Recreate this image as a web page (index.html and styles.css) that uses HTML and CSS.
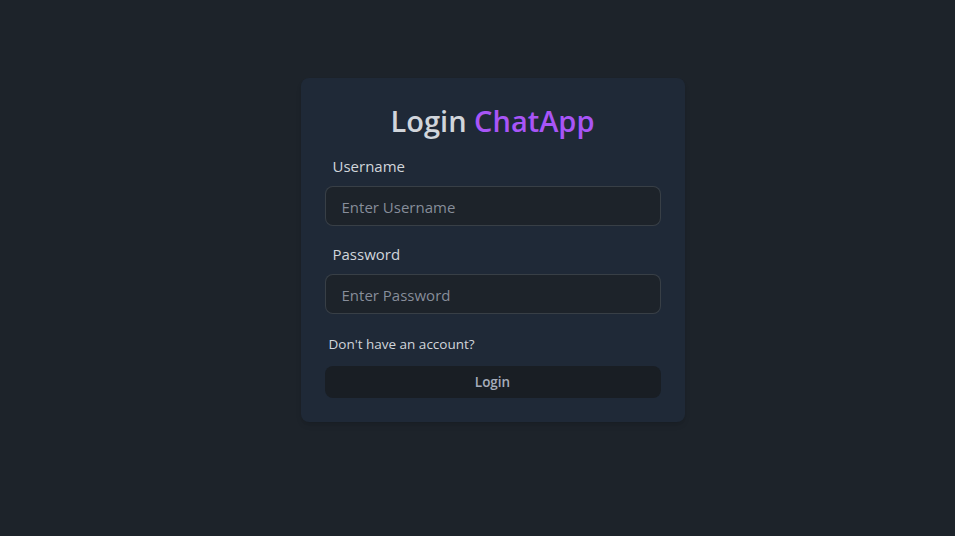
FILE: index.html
```html
<!DOCTYPE html>
<html lang="en">
<head>
<meta charset="utf-8">
<title>Login ChatApp</title>
<link rel="stylesheet" href="styles.css">
</head>
<body>
<div class="page">
  <div class="card">
    <h1 class="title">Login <span class="brand">ChatApp</span></h1>
    <form class="form">
      <div class="field">
        <label class="label"><span class="label-text">Username</span></label>
        <input class="input" type="text" placeholder="Enter Username">
      </div>
      <div class="field">
        <label class="label"><span class="label-text">Password</span></label>
        <input class="input" type="password" placeholder="Enter Password">
      </div>
      <a class="link" href="#">Don't have an account?</a>
      <button class="btn" type="button">Login</button>
    </form>
  </div>
</div>
</body>
</html>
```

FILE: styles.css
```css
* { box-sizing: border-box; }
html, body { margin: 0; height: 100%; }
body {
  background: #1d232a;
  font-family: "Open Sans", "Noto Sans", sans-serif;
  color: #a6adbb;
}
.page {
  height: 100%;
  display: flex;
  align-items: center;
  justify-content: center;
  padding: 0 0 37px 30px;
}
.card {
  width: 384px;
  padding: 24px;
  background: #1f2937;
  border-radius: 8px;
  box-shadow: 0 4px 6px -1px rgba(0,0,0,0.1), 0 2px 4px -2px rgba(0,0,0,0.1);
}
.title {
  margin: 0;
  padding-top: 2px;
  text-align: center;
  font-size: 29px;
  line-height: 34px;
  font-weight: 600;
  color: #d1d5db;
}
.brand { color: #a855f7; }
.form { display: flex; flex-direction: column; }
.field { margin-top: 8px; display: flex; flex-direction: column; }
.label { padding: 8px; display: block; line-height: 24px; }
.label-text {
  font-size: 15px;
  line-height: 24px;
  color: #d1d5db;
}
.input {
  height: 40px;
  width: 100%;
  background: #1d232a;
  border: 1px solid rgba(166,173,187,0.2);
  border-radius: 8px;
  padding: 2px 16px 0;
  font-family: inherit;
  font-size: 15px;
  color: #a6adbb;
  outline: none;
}
.input::placeholder { color: rgba(166,173,187,0.78); }
.link {
  margin: 20px 0 0 4px;
  font-size: 13.5px;
  line-height: 20px;
  color: #d1d5db;
  text-decoration: none;
  align-self: flex-start;
}
.btn {
  margin-top: 12px;
  height: 32px;
  width: 100%;
  padding: 1px 0 0;
  background: #191e24;
  border: none;
  border-radius: 8px;
  font-family: inherit;
  font-size: 13.5px;
  font-weight: 600;
  color: #a6adbb;
}
```
